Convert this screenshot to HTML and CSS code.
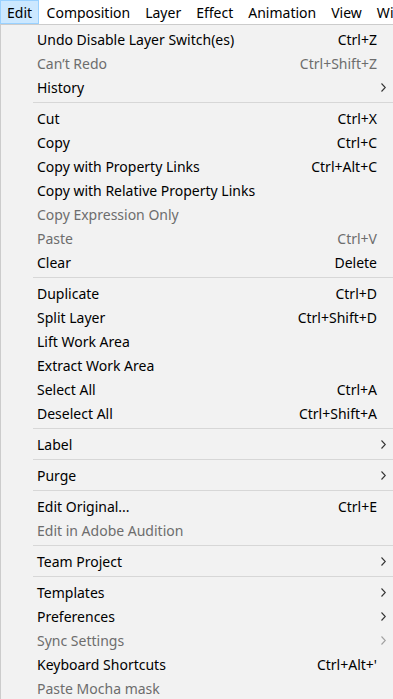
FILE: index.html
```html
<!DOCTYPE html>
<html>
<head>
<meta charset="utf-8">
<link rel="stylesheet" href="styles.css">
</head>
<body>
<div class="menubar">
  <span class="mb-item active">Edit</span>
  <span class="mb-item">Composition</span>
  <span class="mb-item">Layer</span>
  <span class="mb-item">Effect</span>
  <span class="mb-item">Animation</span>
  <span class="mb-item">View</span>
  <span class="mb-item">Window</span>
</div>
<div class="dropdown">
  <div class="row"><span class="label">Undo Disable Layer Switch(es)</span><span class="key">Ctrl+Z</span><span class="sub"></span></div>
  <div class="row disabled"><span class="label">Can’t Redo</span><span class="key">Ctrl+Shift+Z</span><span class="sub"></span></div>
  <div class="row"><span class="label">History</span><span class="key"></span><span class="sub"><svg viewBox="0 0 5 9" class="chev"><path d="M0.5 0.5 L4.3 4.5 L0.5 8.5"/></svg></span></div>
  <div class="sep"></div>
  <div class="row"><span class="label">Cut</span><span class="key">Ctrl+X</span><span class="sub"></span></div>
  <div class="row"><span class="label">Copy</span><span class="key">Ctrl+C</span><span class="sub"></span></div>
  <div class="row"><span class="label">Copy with Property Links</span><span class="key">Ctrl+Alt+C</span><span class="sub"></span></div>
  <div class="row"><span class="label">Copy with Relative Property Links</span><span class="key"></span><span class="sub"></span></div>
  <div class="row disabled"><span class="label">Copy Expression Only</span><span class="key"></span><span class="sub"></span></div>
  <div class="row disabled"><span class="label">Paste</span><span class="key">Ctrl+V</span><span class="sub"></span></div>
  <div class="row"><span class="label">Clear</span><span class="key">Delete</span><span class="sub"></span></div>
  <div class="sep"></div>
  <div class="row"><span class="label">Duplicate</span><span class="key">Ctrl+D</span><span class="sub"></span></div>
  <div class="row"><span class="label">Split Layer</span><span class="key">Ctrl+Shift+D</span><span class="sub"></span></div>
  <div class="row"><span class="label">Lift Work Area</span><span class="key"></span><span class="sub"></span></div>
  <div class="row"><span class="label">Extract Work Area</span><span class="key"></span><span class="sub"></span></div>
  <div class="row"><span class="label">Select All</span><span class="key">Ctrl+A</span><span class="sub"></span></div>
  <div class="row"><span class="label">Deselect All</span><span class="key">Ctrl+Shift+A</span><span class="sub"></span></div>
  <div class="sep"></div>
  <div class="row"><span class="label">Label</span><span class="key"></span><span class="sub"><svg viewBox="0 0 5 9" class="chev"><path d="M0.5 0.5 L4.3 4.5 L0.5 8.5"/></svg></span></div>
  <div class="sep"></div>
  <div class="row"><span class="label">Purge</span><span class="key"></span><span class="sub"><svg viewBox="0 0 5 9" class="chev"><path d="M0.5 0.5 L4.3 4.5 L0.5 8.5"/></svg></span></div>
  <div class="sep"></div>
  <div class="row"><span class="label">Edit Original...</span><span class="key">Ctrl+E</span><span class="sub"></span></div>
  <div class="row disabled"><span class="label">Edit in Adobe Audition</span><span class="key"></span><span class="sub"></span></div>
  <div class="sep"></div>
  <div class="row"><span class="label">Team Project</span><span class="key"></span><span class="sub"><svg viewBox="0 0 5 9" class="chev"><path d="M0.5 0.5 L4.3 4.5 L0.5 8.5"/></svg></span></div>
  <div class="sep"></div>
  <div class="row"><span class="label">Templates</span><span class="key"></span><span class="sub"><svg viewBox="0 0 5 9" class="chev"><path d="M0.5 0.5 L4.3 4.5 L0.5 8.5"/></svg></span></div>
  <div class="row"><span class="label">Preferences</span><span class="key"></span><span class="sub"><svg viewBox="0 0 5 9" class="chev"><path d="M0.5 0.5 L4.3 4.5 L0.5 8.5"/></svg></span></div>
  <div class="row disabled"><span class="label">Sync Settings</span><span class="key"></span><span class="sub"><svg viewBox="0 0 5 9" class="chev"><path d="M0.5 0.5 L4.3 4.5 L0.5 8.5"/></svg></span></div>
  <div class="row"><span class="label">Keyboard Shortcuts</span><span class="key">Ctrl+Alt+'</span><span class="sub"></span></div>
  <div class="row disabled"><span class="label">Paste Mocha mask</span><span class="key"></span><span class="sub"></span></div>
</div>
</body>
</html>
```
FILE: styles.css
```css
html, body {
  margin: 0;
  padding: 0;
  overflow: hidden;
  background: #f2f2f2;
}
body {
  width: 393px;
  height: 699px;
  font-family: "Noto Sans", "Open Sans", sans-serif;
  font-size: 14px;
  color: #000;
}
.menubar {
  display: flex;
  height: 24px;
  background: #fff;
  white-space: nowrap;
  overflow: hidden;
}
.mb-item {
  display: flex;
  align-items: center;
  padding: 0 6.5px;
  box-sizing: border-box;
  height: 24px;
  border: 1px solid transparent;
}
.mb-item.active {
  padding: 0 6px;
  background: #cce8ff;
  border-color: #99d1ff;
}
.dropdown {
  width: 393px;
  border-top: 1px solid #cccccc;
  border-left: 1px solid #cccccc;
  background: #f2f2f2;
  padding-top: 2px;
  box-sizing: border-box;
}
.row {
  display: grid;
  grid-template-columns: 1fr auto 16px;
  align-items: center;
  height: 24px;
  padding-left: 36px;
  white-space: nowrap;
}
.row.disabled {
  color: #6d6d6d;
}
.key {
  text-align: right;
}
.sub {
  display: flex;
  align-items: center;
  padding-left: 4px;
}
.chev {
  width: 5px;
  height: 9px;
  fill: none;
  stroke: #333;
  stroke-width: 1.1;
}
.row.disabled .chev {
  stroke: #a0a0a0;
}
.sep {
  height: 1px;
  background: #d7d7d7;
  margin: 3px 0 3px 32px;
}
```
